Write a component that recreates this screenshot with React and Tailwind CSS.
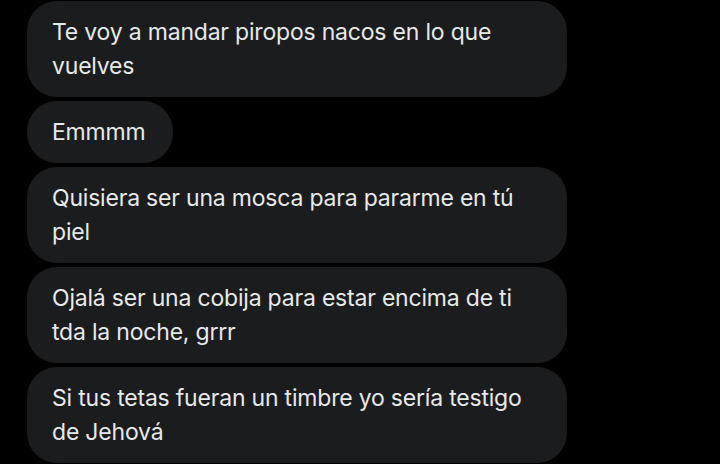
import React from 'react';

const messages = [
  ['Te voy a mandar piropos nacos en lo que', 'vuelves'],
  ['Emmmm'],
  ['Quisiera ser una mosca para pararme en tú', 'piel'],
  ['Ojalá ser una cobija para estar encima de ti', 'tda la noche, grrr'],
  ['Si tus tetas fueran un timbre yo sería testigo', 'de Jehová'],
];

const Bubble = ({ lines }) => (
  <div
    className={`${lines.length > 1 ? 'w-[540px]' : 'w-[146px]'} rounded-[30px] bg-[#1b1c1e] px-[25px] py-[14px] text-[23px] leading-[34px] tracking-[-0.2px] text-[#e7e9ea]`}
  >
    {lines.map((l, i) => (
      <div key={i} className="whitespace-nowrap">
        {l}
      </div>
    ))}
  </div>
);

export default function App() {
  return (
    <div
      className="h-[464px] w-[720px] overflow-hidden bg-black pl-[27px] pt-px"
      style={{ fontFamily: 'Inter, "Noto Sans", sans-serif' }}
    >
      <div className="flex flex-col gap-1">
        {messages.map((m, i) => (
          <Bubble key={i} lines={m} />
        ))}
      </div>
    </div>
  );
}
